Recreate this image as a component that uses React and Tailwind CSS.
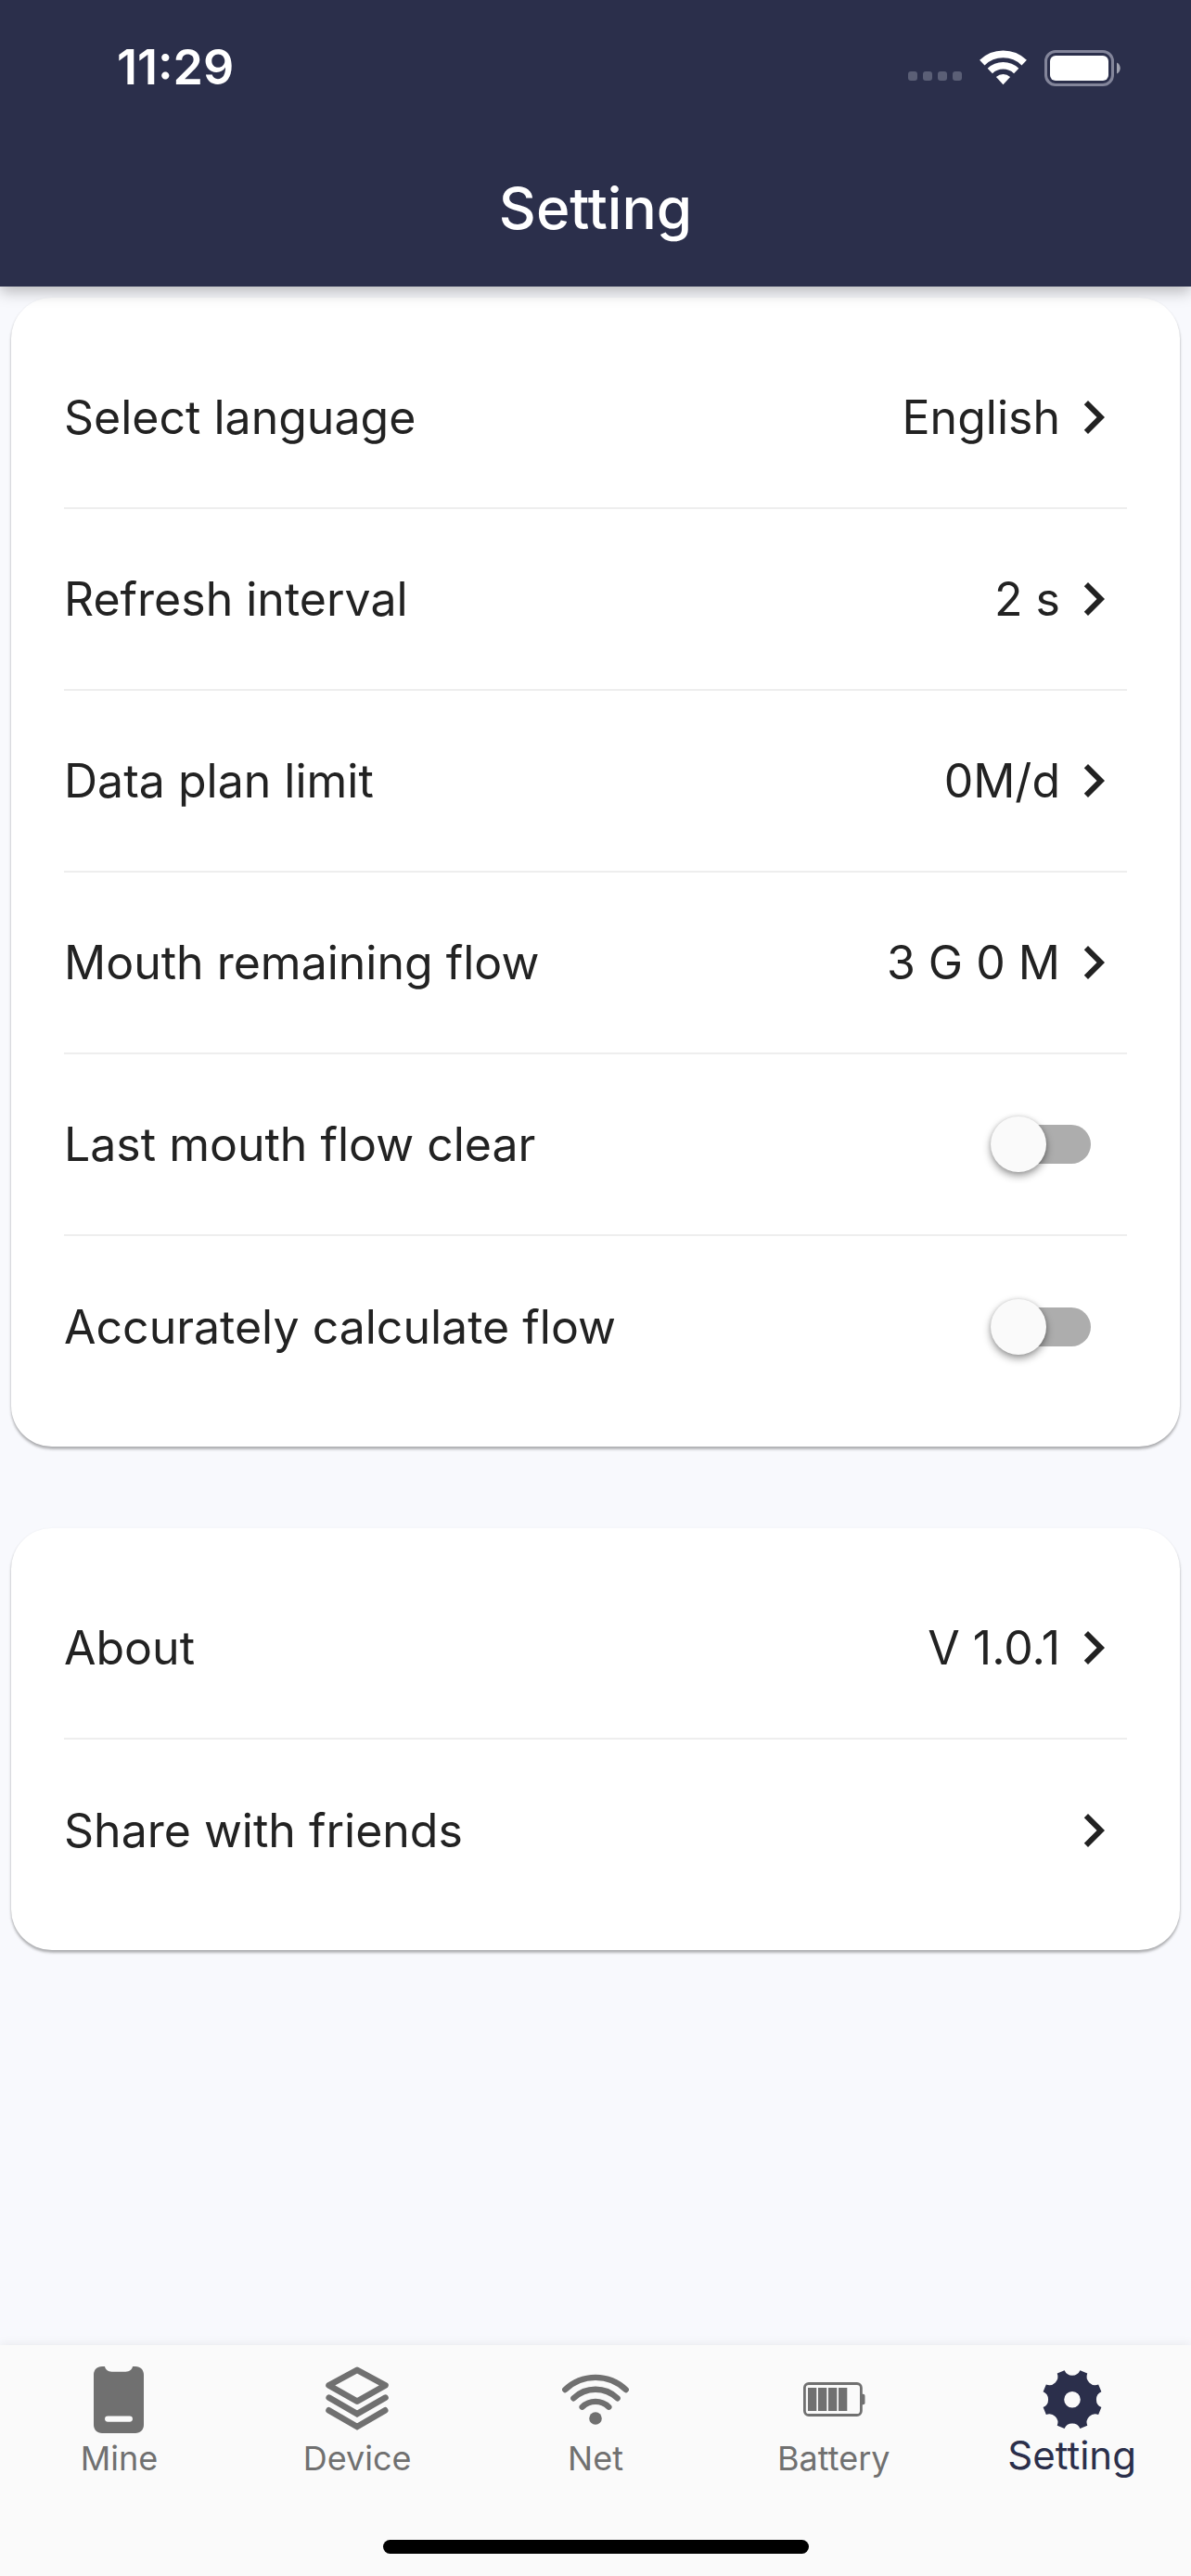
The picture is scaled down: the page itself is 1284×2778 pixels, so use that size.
import React, { useState } from 'react';

// Eight-tooth gear, scallops cut between the teeth
const gearPath = (() => {
    const cx = 36;
    const cy = 35.7;
    const r = 32.5;
    const point = (deg) => {
        const a = (deg * Math.PI) / 180;
        return `${(cx + r * Math.cos(a)).toFixed(2)} ${(cy + r * Math.sin(a)).toFixed(2)}`;
    };
    let d = `M${point(-15)}`;
    for (let i = 0; i < 8; i++) {
        const base = i * 45;
        d += `A9.2 9.2 0 0 0 ${point(base + 15)}L${point(base + 30)}`;
    }
    return `${d}ZM44.8 35.7a8.8 8.8 0 1 0 -17.6 0a8.8 8.8 0 1 0 17.6 0Z`;
})();

function SignalDots() {
    return (
        <div className="mt-[18px] flex gap-[6px]">
            {[0, 1, 2, 3].map((i) => (
                <span key={i} className="size-[10px] rounded-[3px] bg-[#5b5f76]" />
            ))}
        </div>
    );
}

function StatusWifi() {
    return (
        <svg width="51" height="38" viewBox="0 0 51 38" fill="none" aria-hidden="true">
            <path d="M2.8 13.6A32.7 32.7 0 0 1 48.2 13.6" stroke="#fff" strokeWidth="7.8" />
            <path d="M11.3 22.4A20.5 20.5 0 0 1 39.7 22.4" stroke="#fff" strokeWidth="7.6" />
            <path d="M17.9 28.9A11.6 11.6 0 0 1 33.1 28.9L25.5 37.2Z" fill="#fff" />
        </svg>
    );
}

function StatusBattery() {
    return (
        <svg width="82" height="39" viewBox="0 0 82 39" fill="none" aria-hidden="true">
            <rect x="1.5" y="1.5" width="72" height="36" rx="10.5" stroke="#83859a" strokeWidth="3" />
            <rect x="6" y="6" width="63" height="27" rx="6" fill="#fff" />
            <path d="M78 13.5c5 2 5 10 0 12Z" fill="#a0a2b0" />
        </svg>
    );
}

function ChevronRight() {
    return (
        <svg className="size-[72px] shrink-0" viewBox="0 0 24 24" fill="currentColor" aria-hidden="true">
            <path d="M10 6 8.59 7.41 13.17 12l-4.58 4.59L10 18l6-6z" />
        </svg>
    );
}

function MineIcon() {
    return (
        <path
            fill="currentColor"
            fillRule="evenodd"
            d="M18 0h3c.6 3.4 3.4 5.7 7.5 5.7h15c4.1 0 6.9-2.3 7.5-5.7h3c5.5 0 9 3.8 9 9v54c0 5.2-3.8 9-9 9H18c-5.2 0-9-3.8-9-9V9c0-5.2 3.5-9 9-9ZM24.2 53.4a3.15 3.15 0 0 0 0 6.3h23.6a3.15 3.15 0 0 0 0-6.3Z"
        />
    );
}

function DeviceIcon() {
    return (
        <g fill="none" stroke="currentColor" strokeWidth="6.6" strokeLinecap="round">
            <path strokeLinejoin="round" d="M36 3.8 66.5 20.4 36 37.6 5.5 20.4Z" />
            <path d="M5.7 33.6 36 51.2 66.5 33.6" />
            <path d="M5.5 47.3 36 65 66.2 47.3" />
        </g>
    );
}

function NetIcon() {
    return (
        <g fill="none" stroke="currentColor" strokeWidth="6.4" strokeLinecap="round">
            <path d="M3.3 25A47.2 47.2 0 0 1 68.7 25" />
            <path d="M12.4 34.3A34 34 0 0 1 59.6 34.3" />
            <path d="M21.7 43.7A20.5 20.5 0 0 1 50.3 43.7" />
            <circle cx="36" cy="56" r="6.8" fill="currentColor" stroke="none" />
        </g>
    );
}

function BatteryIcon() {
    return (
        <g fill="currentColor">
            <rect x="4.4" y="18.5" width="61" height="34" rx="4.5" fill="none" stroke="currentColor" strokeWidth="2.8" />
            <rect x="8" y="23" width="9.3" height="25" />
            <rect x="19" y="23" width="9.3" height="25" />
            <rect x="30" y="23" width="9.3" height="25" />
            <rect x="41" y="23" width="9.3" height="25" />
            <path d="M66 29.7h1.5a2 2 0 0 1 2 2v7.6a2 2 0 0 1-2 2H66Z" />
        </g>
    );
}

function SettingIcon() {
    return <path fill="currentColor" fillRule="evenodd" d={gearPath} />;
}

const tabs = [
    { label: 'Mine', Icon: MineIcon },
    { label: 'Device', Icon: DeviceIcon },
    { label: 'Net', Icon: NetIcon },
    { label: 'Battery', Icon: BatteryIcon },
    { label: 'Setting', Icon: SettingIcon },
];

function Card({ children }) {
    return (
        <section className="mx-3 divide-y-2 divide-[#eeeeee] rounded-[44px] bg-white px-[57px] pt-[32px] pb-[31px] shadow-[0_3px_3px_rgba(0,0,0,0.26),0_1px_3px_rgba(0,0,0,0.1)]">
            {children}
        </section>
    );
}

function LinkRow({ label, value }) {
    return (
        <button type="button" className="flex h-[196px] w-full items-center text-left">
            <span className="flex-1">{label}</span>
            {value && <span>{value}</span>}
            <ChevronRight />
        </button>
    );
}

function SwitchRow({ label }) {
    const [on, setOn] = useState(false);
    return (
        <label className="flex h-[196px] w-full items-center">
            <span className="flex-1">{label}</span>
            <input
                type="checkbox"
                role="switch"
                checked={on}
                onChange={(e) => setOn(e.target.checked)}
                className="mr-[39px] flex h-[42px] w-[99px] appearance-none items-center rounded-full bg-[#adadad] before:-ml-[9px] before:size-[60px] before:shrink-0 before:rounded-full before:bg-[#fafafa] before:shadow-[0_4px_8px_rgba(0,0,0,0.4),0_0_4px_rgba(0,0,0,0.12)] before:content-[''] checked:bg-[#9597a5] checked:before:ml-[48px] checked:before:bg-[#2b2f4b]"
            />
        </label>
    );
}

export default function App() {
    const [active, setActive] = useState('Setting');

    return (
        <div className="flex min-h-screen flex-col bg-[#f8f9fd] font-['Inter',sans-serif] text-[50px] leading-[60px] text-[#222222]">
            <header className="relative bg-[#2b2f4b] text-white shadow-[0_6px_15px_rgba(0,0,0,0.25)]">
                <div className="flex h-[141px] items-center justify-between pt-[5px] pr-[76px] pl-[126px]">
                    <span className="text-[52px] font-semibold">11:29</span>
                    <div className="flex items-center">
                        <SignalDots />
                        <div className="ml-[19px]">
                            <StatusWifi />
                        </div>
                        <div className="ml-[19px]">
                            <StatusBattery />
                        </div>
                    </div>
                </div>
                <h1 className="flex h-[168px] items-center justify-center text-[62px] font-medium">Setting</h1>
            </header>

            <main className="flex flex-1 flex-col gap-[88px] pt-3 pb-12">
                <Card>
                    <LinkRow label="Select language" value="English" />
                    <LinkRow label="Refresh interval" value="2 s" />
                    <LinkRow label="Data plan limit" value="0M/d" />
                    <LinkRow label="Mouth remaining flow" value="3 G 0 M" />
                    <SwitchRow label="Last mouth flow clear" />
                    <SwitchRow label="Accurately calculate flow" />
                </Card>
                <Card>
                    <LinkRow label="About" value="V 1.0.1" />
                    <LinkRow label="Share with friends" />
                </Card>
            </main>

            <nav className="bg-[#fafafa] shadow-[0_-2px_10px_rgba(0,0,0,0.06)]">
                <div className="grid h-[210px] grid-cols-5">
                    {tabs.map(({ label, Icon }) => (
                        <button
                            key={label}
                            type="button"
                            onClick={() => setActive(label)}
                            aria-current={active === label ? 'page' : undefined}
                            className={`flex flex-col items-center pt-[23px] ${active === label ? 'text-[42px] leading-[48px] text-[#2b2f4b]' : 'text-[36px] leading-[54px] text-[#707070]'}`}
                        >
                            <svg className="size-[72px]" viewBox="0 0 72 72" aria-hidden="true">
                                <Icon />
                            </svg>
                            <span>{label}</span>
                        </button>
                    ))}
                </div>
                <div className="mx-auto mb-[24px] h-[15px] w-[459px] rounded-full bg-black" />
            </nav>
        </div>
    );
}
